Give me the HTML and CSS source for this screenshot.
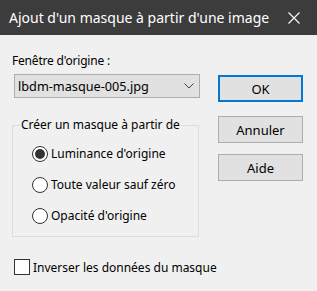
FILE: index.html
```html
<!DOCTYPE html>
<html lang="fr">
<head>
<meta charset="utf-8">
<title>Ajout d'un masque</title>
<link rel="stylesheet" href="styles.css">
</head>
<body>
<div class="window">
  <div class="titlebar">
    <span class="title">Ajout d'un masque à partir d'une image</span>
    <svg class="close" width="12" height="12" viewBox="0 0 12 12"><path d="M0.5 0.5 L11.5 11.5 M11.5 0.5 L0.5 11.5" stroke="#fff" stroke-width="1.1" fill="none"/></svg>
  </div>
  <div class="content">
    <div class="left">
      <div class="label">Fenêtre d'origine :</div>
      <div class="combo">
        <span>lbdm-masque-005.jpg</span>
        <svg class="chev" width="10" height="6" viewBox="0 0 10 6"><path d="M0.5 0.5 L5 5 L9.5 0.5" stroke="#444" stroke-width="1" fill="none"/></svg>
      </div>
      <fieldset class="group">
        <legend>Créer un masque à partir de</legend>
        <div class="radio"><span class="circle checked"></span>Luminance d'origine</div>
        <div class="radio"><span class="circle"></span>Toute valeur sauf zéro</div>
        <div class="radio"><span class="circle"></span>Opacité d'origine</div>
      </fieldset>
      <div class="check"><span class="box"></span>Inverser les données du masque</div>
    </div>
    <div class="buttons">
      <div class="btn default">OK</div>
      <div class="btn cancel">Annuler</div>
      <div class="btn help">Aide</div>
    </div>
  </div>
</div>
</body>
</html>
```
FILE: styles.css
```css
html, body {
  margin: 0;
  padding: 0;
  background: #f0f0f0;
}
.window {
  width: 317px;
  height: 291px;
  font-family: "Noto Sans", "Open Sans", sans-serif;
  font-size: 12px;
  color: #000;
  background: #f0f0f0;
  white-space: nowrap;
}
.titlebar {
  height: 35px;
  background: #3c3c3c;
  display: flex;
  align-items: center;
  padding-left: 9px;
  box-sizing: border-box;
}
.title {
  color: #fff;
  font-size: 14px;
  flex: 1;
  line-height: 20px;
}
.close {
  margin-right: 17px;
  flex-shrink: 0;
}
.content {
  display: flex;
  padding-left: 12px;
}
.left {
  width: 187px;
  flex-shrink: 0;
}
.label {
  margin-top: 18px;
  line-height: 16px;
  height: 16px;
  letter-spacing: -0.2px;
}
.combo {
  margin-top: 5px;
  margin-left: 2px;
  width: 186px;
  height: 24px;
  box-sizing: border-box;
  border: 1px solid #adadad;
  background: #e1e1e1;
  display: flex;
  align-items: center;
  justify-content: space-between;
  padding: 0 5px 0 3px;
  font-size: 12.7px;
}
.group {
  margin: 19px 0 0 0;
  padding: 0 0 12px 0;
  border: 1px solid #dcdcdc;
  width: 187px;
  box-sizing: border-box;
  min-width: 0;
}
.group legend {
  margin-left: 7px;
  padding: 0 1px;
  line-height: 16px;
}
.radio {
  display: flex;
  align-items: center;
  height: 16px;
  line-height: 16px;
  margin-top: 15px;
  margin-left: 19px;
}
.radio:first-of-type {
  margin-top: 13px;
}
.circle {
  flex-shrink: 0;
  width: 16px;
  height: 16px;
  box-sizing: border-box;
  border: 1px solid #333;
  border-radius: 50%;
  background: #fff;
  margin-right: 3px;
  display: flex;
  align-items: center;
  justify-content: center;
}
.circle.checked::after {
  content: "";
  width: 10px;
  height: 10px;
  border-radius: 50%;
  background: #333;
}
.check {
  display: flex;
  align-items: center;
  width: max-content;
  margin-top: 22px;
  margin-left: 2px;
  height: 16px;
}
.box {
  flex-shrink: 0;
  width: 16px;
  height: 16px;
  box-sizing: border-box;
  border: 1px solid #333;
  background: #fff;
  margin-right: 3px;
}
.buttons {
  margin-left: 19px;
  display: flex;
  flex-direction: column;
}
.btn {
  width: 85px;
  height: 27px;
  box-sizing: border-box;
  border: 1px solid #adadad;
  background: #e1e1e1;
  display: flex;
  align-items: center;
  justify-content: center;
  font-size: 13px;
}
.btn.default {
  margin-top: 40px;
  border: 2px solid #0078d7;
}
.btn.cancel {
  margin-top: 14px;
}
.btn.help {
  margin-top: 11px;
}
```
